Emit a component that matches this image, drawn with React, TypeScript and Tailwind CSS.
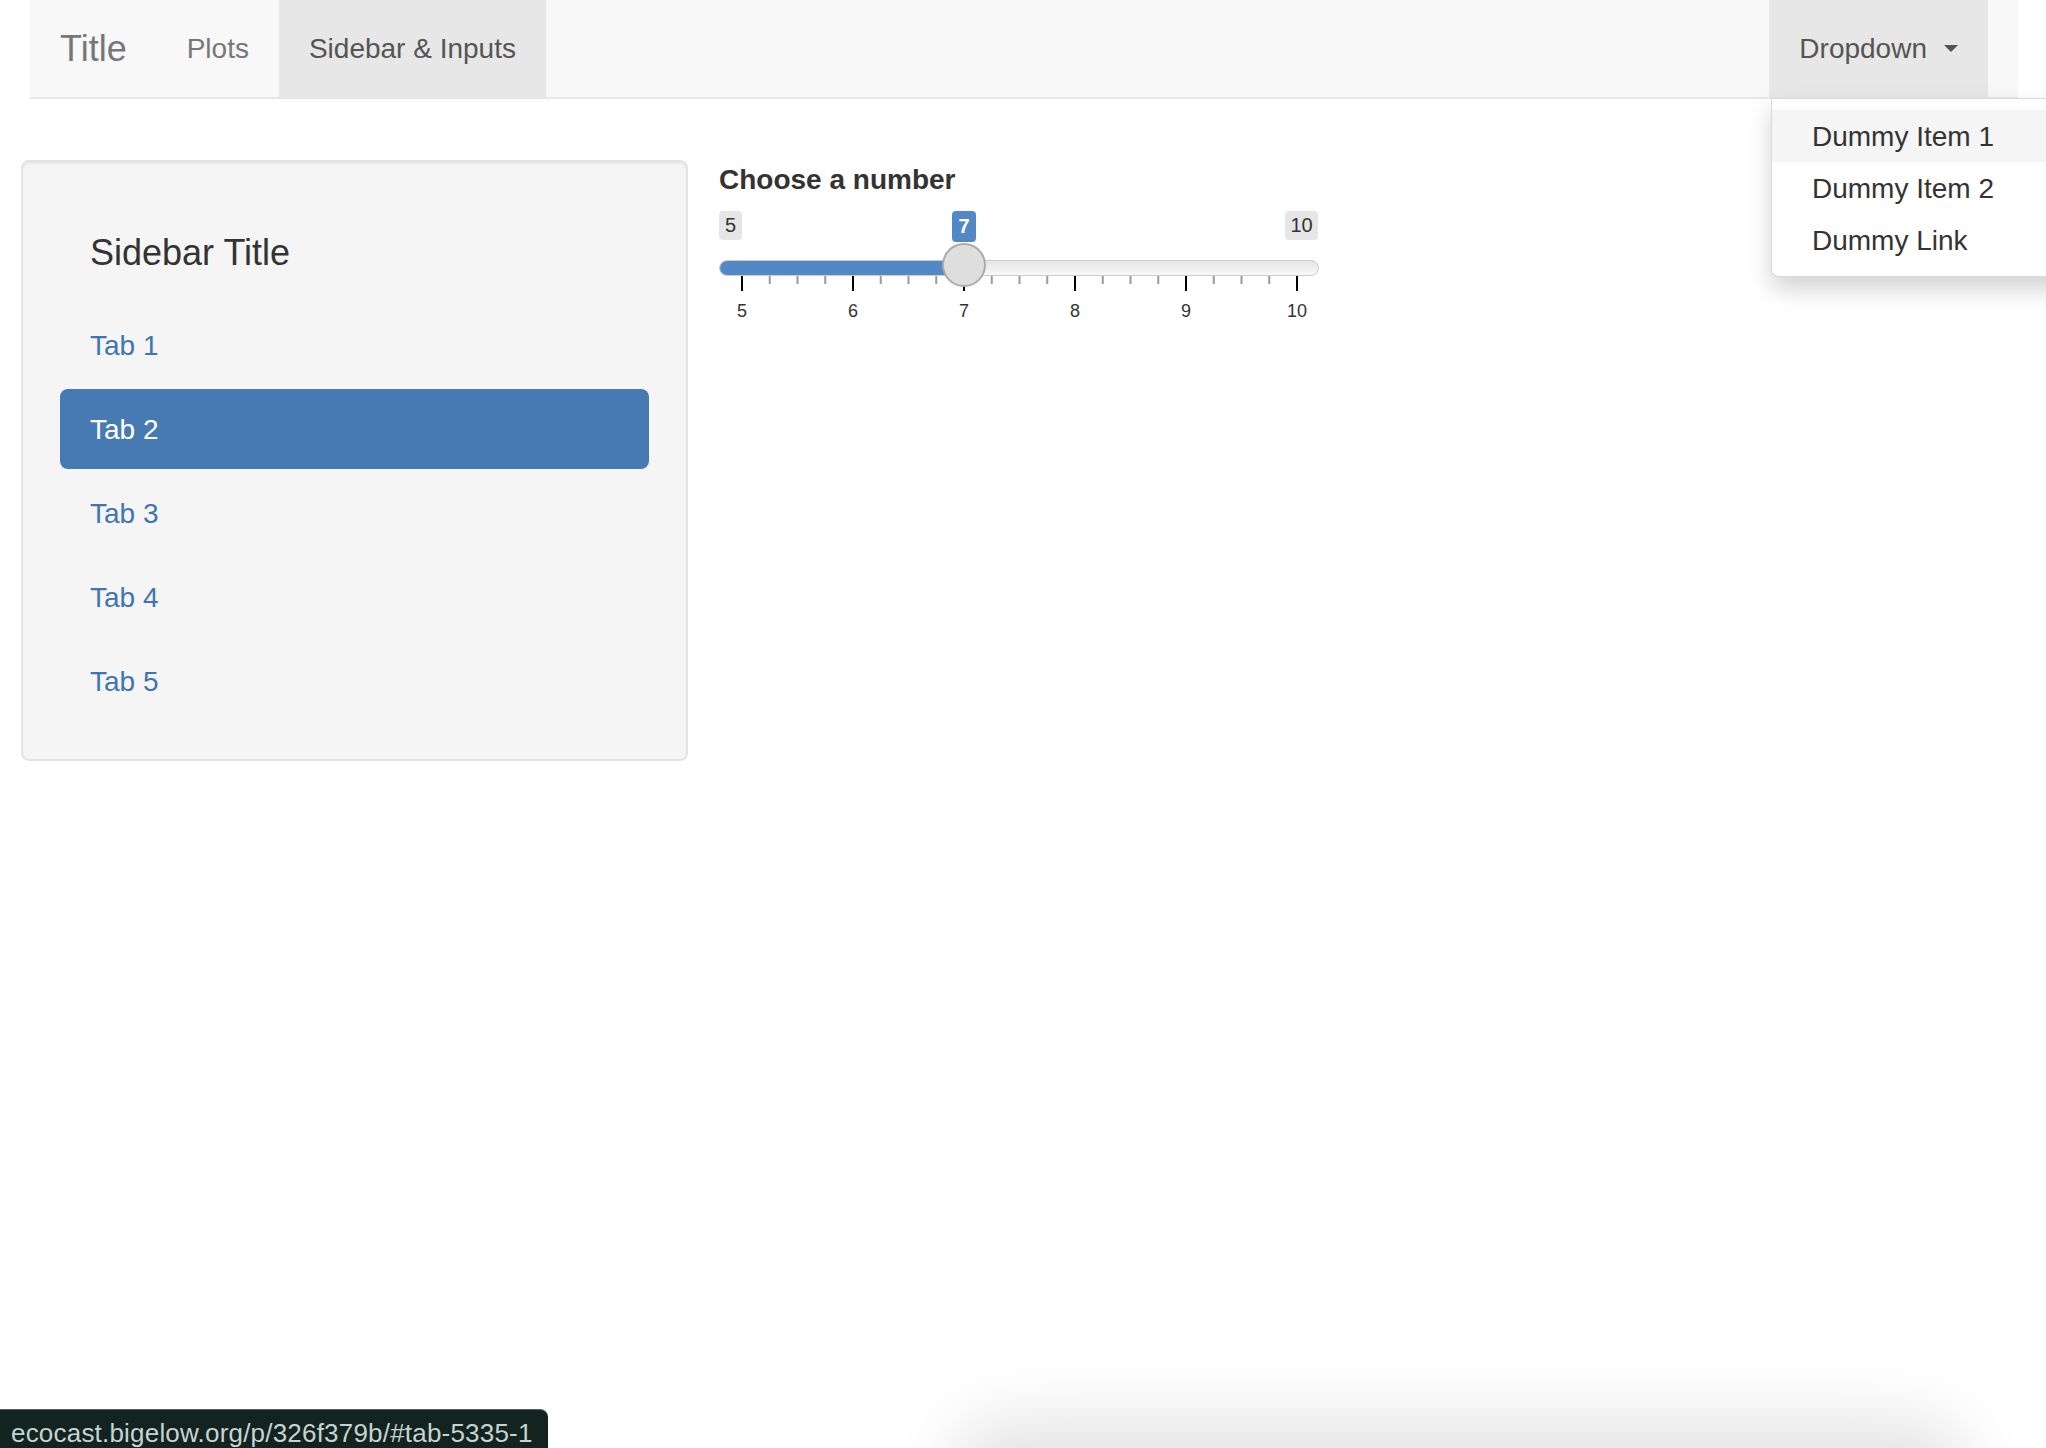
import React from 'react';

const navLinks = [
  { label: 'Plots', active: false },
  { label: 'Sidebar & Inputs', active: true },
];

const tabs = ['Tab 1', 'Tab 2', 'Tab 3', 'Tab 4', 'Tab 5'];

const menuItems = ['Dummy Item 1', 'Dummy Item 2', 'Dummy Link'];

// slider geometry (px inside the 600px slider)
const MIN = 5;
const MAX = 10;
const VALUE = 7;
const GRID_START = 23;
const STEP = 111;

function Navbar() {
  return (
    <div className="ml-[30px] w-[1988px] h-[99px] flex justify-between pr-[30px] bg-[#f8f8f8] border-b-2 border-[#e7e7e7]">
      <div className="flex items-stretch">
        <div className="flex items-center px-[30px] text-[36px] leading-[40px] text-[#777777]">Title</div>
        {navLinks.map((l) => (
          <div
            key={l.label}
            className={`flex items-center px-[30px] text-[28px] leading-[40px] ${
              l.active ? 'bg-[#e7e7e7] text-[#555555]' : 'text-[#777777]'
            }`}
          >
            {l.label}
          </div>
        ))}
      </div>
      <div className="flex items-center px-[30px] bg-[#e7e7e7] text-[28px] leading-[40px] text-[#555555]">
        Dropdown
        <span className="ml-[17px] w-0 h-0 border-t-[7px] border-t-[#555555] border-x-[7px] border-x-transparent" />
      </div>
    </div>
  );
}

function DropdownMenu() {
  return (
    <div className="absolute left-[1771px] top-[98px] w-[320px] bg-white border border-[rgba(0,0,0,0.15)] rounded-b-[8px] pt-[11px] pb-[10px] shadow-[0_12px_24px_rgba(0,0,0,0.175)]">
      {menuItems.map((item, i) => (
        <div
          key={item}
          className={`h-[52px] px-[40px] pt-[2px] text-[28px] leading-[50px] text-[#333333] ${i === 0 ? 'bg-[#f5f5f5]' : ''}`}
        >
          {item}
        </div>
      ))}
    </div>
  );
}

function Sidebar() {
  return (
    <div className="w-[667px] bg-[#f5f5f5] border-2 border-[#e3e3e3] rounded-[8px] px-[37px] pt-[37px] pb-[38px] shadow-[inset_0_2px_2px_rgba(0,0,0,0.05)]">
      <div className="pl-[30px] pt-[34px] pb-[32px] text-[36px] leading-[40px] text-[#333333]">Sidebar Title</div>
      <div className="flex flex-col gap-[4px]">
        {tabs.map((t) => (
          <div
            key={t}
            className={`h-[80px] flex items-center px-[30px] pt-[1px] rounded-[8px] text-[28px] leading-[40px] ${
              t === 'Tab 2' ? 'bg-[#477ab3] text-white' : 'text-[#3f75b3]'
            }`}
          >
            {t}
          </div>
        ))}
      </div>
    </div>
  );
}

function Slider() {
  const pos = GRID_START + (VALUE - MIN) * STEP;
  const values = Array.from({ length: MAX - MIN + 1 }, (_, i) => MIN + i);
  const minors: number[] = [];
  for (let i = 0; i < MAX - MIN; i++) {
    for (let j = 1; j < 4; j++) minors.push(GRID_START + i * STEP + (j * STEP) / 4);
  }

  return (
    <div className="w-[600px] flex flex-col">
      {/* min / max labels, value bubble above the handle */}
      <div className="relative h-[43px] pt-[11px] flex justify-between items-start text-[20px] text-[#333333]">
        <div className="w-[23px] h-[29px] rounded-[4px] bg-[#e6e6e6] leading-[29px] text-center">{MIN}</div>
        <div className="w-[33px] h-[29px] mr-[1px] rounded-[4px] bg-[#e6e6e6] leading-[29px] text-center">{MAX}</div>
        <div
          className="absolute top-[11px] w-[24px] h-[31px] rounded-[4px] bg-[#5388c6] font-bold leading-[31px] text-center text-white"
          style={{ left: pos - 12 }}
        >
          {VALUE}
        </div>
      </div>

      {/* track */}
      <div className="relative h-[33px] pt-[17px]">
        <div className="h-[16px] rounded-full border border-[#cccccc] bg-gradient-to-b from-[#e4e4e4] to-[#f8f8f8] overflow-hidden">
          <div className="h-full bg-[#5388c6]" style={{ width: pos }} />
        </div>
        <div
          className="absolute top-0 w-[44px] h-[44px] rounded-full bg-[#dedede] border-2 border-[#ababab]"
          style={{ left: pos - 22 }}
        />
      </div>

      {/* grid ticks */}
      <svg width="600" height="15" className="block">
        {minors.map((x) => (
          <rect key={x} x={x - 1} y={0} width={2} height={8} fill="#9a9a9a" />
        ))}
        {values.map((v, i) => (
          <rect key={v} x={GRID_START + i * STEP - 1} y={0} width={2} height={15} fill="#000000" />
        ))}
      </svg>

      {/* grid labels */}
      <div className="flex mt-[11px] ml-[-32.5px] text-[18px] leading-[18px] text-[#333333]">
        {values.map((v) => (
          <div key={v} className="w-[111px] shrink-0 text-center">
            {v}
          </div>
        ))}
      </div>
    </div>
  );
}

export default function App() {
  return (
    <div className="relative w-full h-[1448px] overflow-hidden bg-white font-['Liberation_Sans',Arial,sans-serif]">
      <Navbar />

      <div className="flex items-start gap-[31px] pl-[21px] pt-[61px]">
        <Sidebar />
        <div className="flex flex-col">
          <div className="text-[28px] leading-[40px] font-bold text-[#333333]">Choose a number</div>
          <Slider />
        </div>
      </div>

      <DropdownMenu />

      {/* blurred shadow peeking from below */}
      <div className="absolute left-[985px] top-[1452px] w-[950px] h-[40px] rounded-full shadow-[0_0_70px_30px_rgba(0,0,0,0.12)]" />

      {/* status bar */}
      <div className="absolute left-0 bottom-0 w-[548px] h-[39px] rounded-tr-[8px] bg-[#122320] border-t border-[#556260] pl-[11px] pt-[8px] text-[26px] tracking-[0.2px] leading-[30px] text-[#c5d4d0] whitespace-nowrap overflow-hidden">
        ecocast.bigelow.org/p/326f379b/#tab-5335-1
      </div>
    </div>
  );
}
